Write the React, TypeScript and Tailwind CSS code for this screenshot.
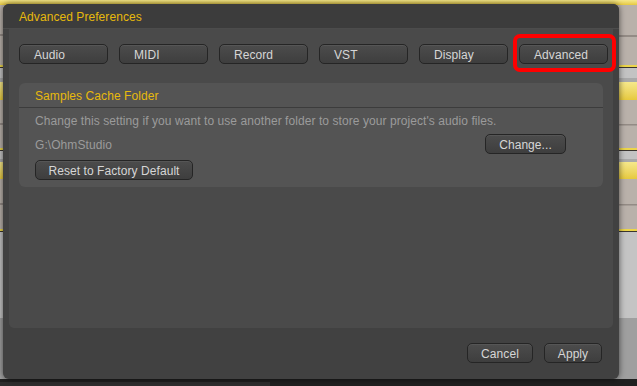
import React from "react";

const font = { fontFamily: '"Liberation Sans", Arial, sans-serif' };

function Btn({ label, className = "" }: { label: string; className?: string }) {
  return (
    <div
      className={
        "flex h-[20px] shrink-0 items-center rounded-[5px] border border-[#252525] bg-gradient-to-b from-[#4c4c4c] to-[#3e3e3e] pt-[2px] text-[12px] leading-[14px] tracking-[0.07px] text-[#d6d6d6] shadow-[inset_0_1px_0_rgba(255,255,255,0.06)] " +
        className
      }
    >
      {label}
    </div>
  );
}

function Wave({ h }: { h: number }) {
  return (
    <div className="relative w-full bg-[#b9b1aa]" style={{ height: h }}>
      <svg className="absolute inset-0 h-full w-full" viewBox="0 0 18 60" preserveAspectRatio="none">
        <path d="M0 30 H2 L3 20 L4 38 L5 14 L6 44 L7 8 L8 50 L9 22 L10 36 L11 27 L12 33 L13 29 L14 31 H18" stroke="#6e6660" strokeWidth="1" fill="none" />
      </svg>
    </div>
  );
}

function Track({ yellow, wave }: { yellow: number; wave: number }) {
  return (
    <div className="flex flex-col">
      <div className="w-full bg-gradient-to-b from-[#f6e88a] to-[#e6c93c]" style={{ height: yellow }} />
      <Wave h={wave} />
      <div className="h-[2px] w-full bg-[#ecd54a]" />
      <div className="h-[1px] w-full bg-[#3a3530]" />
    </div>
  );
}

export default function App() {
  const tabs = ["Audio", "MIDI", "Record", "VST", "Display", "Advanced"];
  return (
    <div className="relative h-[386px] w-[637px] overflow-hidden bg-[#202020]" style={font}>
      {/* background tracks */}
      <div className="flex h-[379px] w-full flex-col bg-[#a2a2a2]">
        <Track yellow={5} wave={60} />
        <div className="h-[10px] w-full bg-[#c3c3c3]" />
        <div className="h-[4px] w-full bg-[#a9a9a9]" />
        <Track yellow={18} wave={48} />
        <div className="h-[8px] w-full bg-[#c3c3c3]" />
        <div className="h-[3px] w-full bg-[#a9a9a9]" />
        <Track yellow={17} wave={50} />
        <div className="h-[86px] w-full bg-[#c4c4c4]" />
        <div className="flex-1 bg-[#9f9f9f]" />
      </div>
      <div className="flex h-[7px] w-full">
        <div className="mt-[3px] h-[4px] w-[270px] bg-[#2e2e2e]" />
      </div>

      {/* dialog */}
      <div className="absolute left-[3px] top-[4px] flex h-[375px] w-[616px] flex-col overflow-hidden rounded-[6px] bg-[#414141] shadow-[0_0_6px_rgba(0,0,0,0.6)]">
        <div className="flex h-[25px] items-center border-b border-[#4c4c4c] bg-[#3c3c3c] pl-[16px] pt-[2px] text-[12px] tracking-[0.07px] text-[#e7b90c]">
          Advanced Preferences
        </div>
        <div className="mx-[6px] flex h-[299px] flex-col rounded-b-[5px] bg-[#4a4a4a] pl-[10px] pr-[5px] pt-[15px]">
          <div className="flex gap-[11px]">
            {tabs.map((t) => (
              <Btn key={t} label={t} className="w-[89px] pl-[14px]" />
            ))}
          </div>
          <div className="mt-[19px] flex h-[104px] w-[584px] flex-col rounded-[6px] bg-[#545454]">
            <div className="flex h-[25px] items-center border-b border-[#3c3c3c] pl-[16px] pt-[2px] text-[12px] tracking-[0.07px] text-[#e7b90c]">
              Samples Cache Folder
            </div>
            <div className="flex flex-col px-[16px]">
              <div className="mt-[6px] text-[12px] leading-[14px] tracking-[0.07px] text-[#9b9b9b]">
                Change this setting if you want to use another folder to store your project's audio files.
              </div>
              <div className="mt-[6px] flex h-[20px] items-center justify-between">
                <span className="pt-[2px] text-[12px] tracking-[0.07px] text-[#9b9b9b]">G:\OhmStudio</span>
                <Btn label="Change..." className="mr-[21px] w-[81px] justify-center" />
              </div>
              <div className="mt-[6px]">
                <Btn label="Reset to Factory Default" className="w-[158px] justify-center" />
              </div>
            </div>
          </div>
        </div>
        <div className="flex flex-1 items-start justify-end gap-[11px] pr-[17px] pt-[15px]">
          <Btn label="Cancel" className="w-[66px] justify-center" />
          <Btn label="Apply" className="w-[58px] justify-center" />
        </div>
      </div>

      {/* red highlight */}
      <div className="absolute left-[513px] top-[34px] h-[38px] w-[103px] rounded-[7px] border-[4px] border-[#ff0000]" />
    </div>
  );
}
